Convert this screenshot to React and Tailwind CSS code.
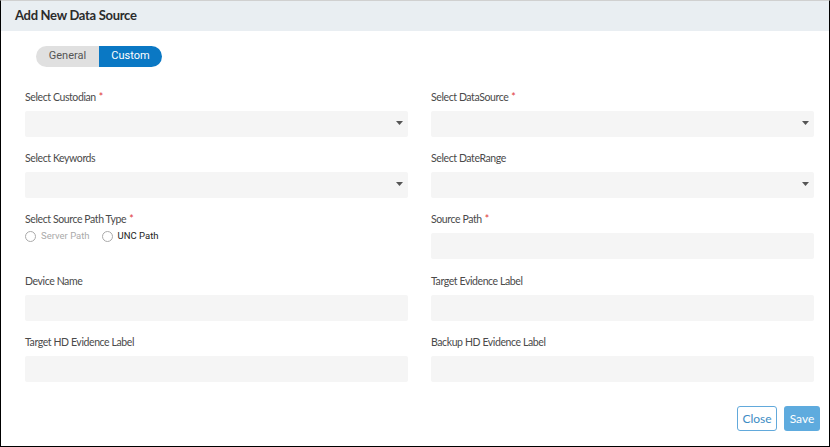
import { useState } from 'react';

const fieldFont = { fontFamily: '"Lato", "Noto Sans", sans-serif' };

function Label({ text, required }) {
  return (
    <div className="text-[10.5px] leading-[14px] tracking-[-0.4px] text-[#4a4a4a]" style={fieldFont}>
      {text}
      {required && <span className="text-[#e03a3a] ml-[3px]">*</span>}
    </div>
  );
}

function Caret() {
  return (
    <svg className="absolute right-[5px] top-[10px]" width="7" height="4" viewBox="0 0 7 4">
      <path d="M0 0h7L3.5 4z" fill="#555" />
    </svg>
  );
}

function Field({ label, required, select }) {
  return (
    <div className="flex flex-col">
      <Label text={label} required={required} />
      <div className="relative mt-[7px] h-[26px] bg-[#f5f5f5] rounded-[2px]">
        {select && <Caret />}
      </div>
    </div>
  );
}

function Radio({ label, muted }) {
  return (
    <label className="flex items-center gap-[5px]">
      <span className="w-[11px] h-[11px] rounded-full border border-[#aaa] bg-white" />
      <span className={`text-[9.5px] ${muted ? 'text-[#aaa]' : 'text-[#222]'}`} style={{ fontFamily: 'Roboto, sans-serif' }}>
        {label}
      </span>
    </label>
  );
}

export default function App() {
  const [tab, setTab] = useState('custom');

  return (
    <div className="w-[830px] h-[447px] bg-white border border-black border-t-[#d0d0d0] flex flex-col">
      {/* Header */}
      <div className="h-[30px] bg-[#e9eef2] flex items-center px-[14px]">
        <h1 className="text-[13px] font-bold tracking-[-0.3px] text-[#2b2b2b]" style={fieldFont}>Add New Data Source</h1>
      </div>

      <div className="flex-1 flex flex-col px-[24px]">
        {/* Tabs */}
        <div className="mt-[15px] ml-[11px] flex w-[126px] h-[21px] rounded-full overflow-hidden text-[11px]" style={{ fontFamily: 'Roboto, sans-serif' }}>
          <button
            onClick={() => setTab('general')}
            className={`flex-1 ${tab === 'general' ? 'bg-[#0a78c4] text-white' : 'bg-[#e0e0e0] text-[#555]'}`}
          >General</button>
          <button
            onClick={() => setTab('custom')}
            className={`flex-1 ${tab === 'custom' ? 'bg-[#0a78c4] text-white' : 'bg-[#e0e0e0] text-[#555]'}`}
          >Custom</button>
        </div>

        {/* Form */}
        <div className="mt-[23px] grid grid-cols-[383px_383px] gap-x-[23px] gap-y-[14px]">
          <Field label="Select Custodian" required select />
          <Field label="Select DataSource" required select />
          <Field label="Select Keywords" select />
          <Field label="Select DateRange" select />
          <div className="flex flex-col">
            <Label text="Select Source Path Type" required />
            <div className="mt-[3px] flex items-center gap-[12px]">
              <Radio label="Server Path" muted />
              <Radio label="UNC Path" />
            </div>
          </div>
          <Field label="Source Path" required />
          <div className="mt-[1px]"><Field label="Device Name" /></div>
          <div className="mt-[1px]"><Field label="Target Evidence Label" /></div>
          <Field label="Target HD Evidence Label" />
          <Field label="Backup HD Evidence Label" />
        </div>

        {/* Footer */}
        <div className="mt-auto mb-[15px] -mr-[16px] flex justify-end gap-[7px] pr-[1px]" style={fieldFont}>
          <button className="h-[25px] w-[40px] rounded-[3px] border border-[#62a9db] bg-white text-[12px] text-[#3d8cc4]">Close</button>
          <button className="h-[25px] w-[36px] rounded-[3px] bg-[#5eabde] text-[12px] text-white">Save</button>
        </div>
      </div>
    </div>
  );
}
